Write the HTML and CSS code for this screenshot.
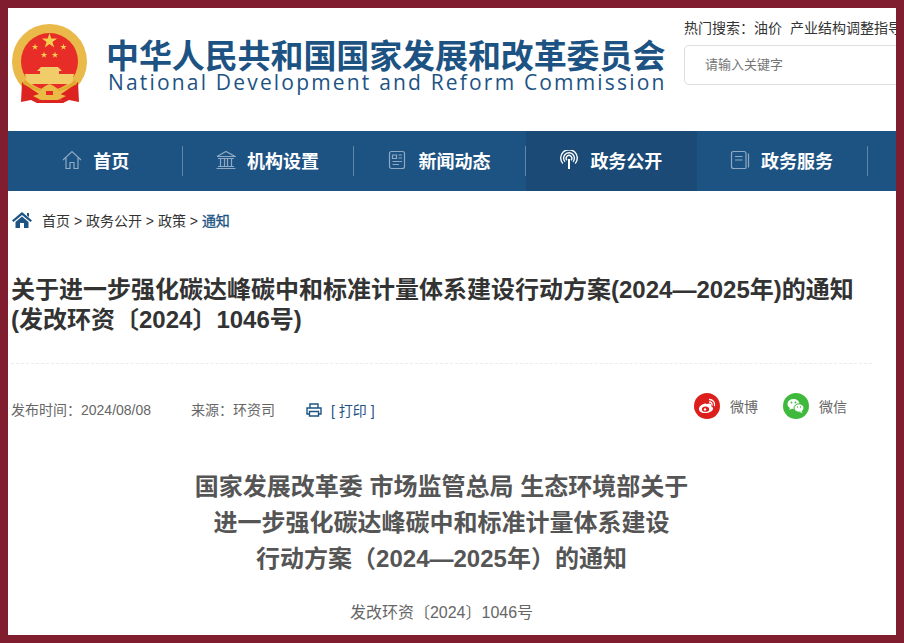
FILE: index.html

```html
<!DOCTYPE html>
<html lang="zh-CN">
<head>
  <meta charset="UTF-8" />
  <title>关于进一步强化碳达峰碳中和标准计量体系建设行动方案(2024—2025年)的通知</title>
  <link rel="stylesheet" href="styles.css">
</head>
<body>
  <div class="page">
    <header class="header">
      <svg class="emblem" viewBox="0 0 76 80" width="76" height="80">
        <defs>
          <polygon id="star" points="0,-1 .2245,-.309 .951,-.309 .363,.118 .588,.809 0,.382 -.588,.809 -.363,.118 -.951,-.309 -.2245,-.309" />
        </defs>
        <circle cx="37.5" cy="37.5" r="37.5" fill="#e9b949" />
        <circle cx="37.5" cy="37.5" r="28.5" fill="#e82c27" />
        <g fill="#f4d04e">
          <use href="#star" transform="translate(37.5 17) scale(8)" />
          <use href="#star" transform="translate(23 23) scale(3.4)" />
          <use href="#star" transform="translate(51.5 23) scale(3.4)" />
          <use href="#star" transform="translate(32 31) scale(3.4)" />
          <use href="#star" transform="translate(43 31) scale(3.4)" />
        </g>
        <path d="M25 47 L29 43 H46 L50 47 H47 V50 H28 V47 Z" fill="#f1cd6a" />
        <path d="M13 50 H62 L60 60 H15 Z" fill="#f1cd6a" />
        <path d="M10 58 L9 78 L19 76 L25 79 L30 72 L21 66 Z" fill="#dc2320" />
        <path d="M66 58 L67 78 L57 76 L51 79 L46 72 L55 66 Z" fill="#dc2320" />
        <path d="M24 79 L30 73 H46 L52 79 Z" fill="#dc2320" />
        <path d="M13 56 Q37.5 78 63 56 L65 60 Q37.5 76 11 60 Z" fill="#e2a92f" />
        <path d="M27 70 Q30 62 37.5 60 Q45 62 48 70 L54 72 L46 76 H29 L21 72 Z" fill="#eabb45" />
        <rect x="34" y="67" width="7" height="4" fill="#e82c27" />
      </svg>
      <div class="site-name">
        <div class="site-cn">中华人民共和国国家发展和改革委员会</div>
        <div class="site-en">National Development and Reform Commission</div>
      </div>
      <div class="search">
        <div class="hot">热门搜索：<span class="hot-word">油价</span><span class="hot-word">产业结构调整指导目录</span></div>
        <div class="search-box">请输入关键字</div>
      </div>
    </header>

    <nav class="nav">
      <a class="nav-item" href="#">
        <svg class="nav-icon" viewBox="0 0 20 20" width="20" height="20"><path d="M1 10 L10 1.5 L19 10 M4 8 V18.5 H8 V12.5 H12 V18.5 H16 V8" /></svg>
        <span>首页</span>
      </a>
      <i class="nav-sep"></i>
      <a class="nav-item" href="#">
        <svg class="nav-icon" viewBox="0 0 20 20" width="20" height="20"><path d="M1 6.5 L10 1.5 L19 6.5 H1 M2 8.5 H18 M4.5 9 V16 M8.5 9 V16 M11.5 9 V16 M15.5 9 V16 M2 16.5 H18 M0.5 18.5 H19.5" /></svg>
        <span>机构设置</span>
      </a>
      <i class="nav-sep"></i>
      <a class="nav-item" href="#">
        <svg class="nav-icon" viewBox="0 0 20 20" width="20" height="20"><rect x="2.5" y="1.5" width="15" height="17" rx="2" /><path d="M5.5 5 H9.5 V8.5 H5.5 Z M11.5 5 H15 M11.5 8 H15 M5.5 11.5 H15 M5.5 14.5 H12" /></svg>
        <span>新闻动态</span>
      </a>
      <i class="nav-sep"></i>
      <a class="nav-item active" href="#">
        <svg class="nav-icon" viewBox="0 0 20 20" width="20" height="20"><path d="M3.8 13.5 A8.3 8.3 0 1 1 16.2 13.5 M6 11.8 A5.4 5.4 0 1 1 14 11.8 M8 10.2 A2.8 2.8 0 1 1 12 10.2" /><path class="mast" d="M10 9 V19" /></svg>
        <span>政务公开</span>
      </a>
      <a class="nav-item" href="#">
        <svg class="nav-icon" viewBox="0 0 20 20" width="20" height="20"><path d="M16 18.5 H3.5 Q1.5 18.5 1.5 16.5 V3.5 Q1.5 1.5 3.5 1.5 H14 Q16 1.5 16 3.5 V18.5 M18.5 3.5 V17.5 M5 6.5 H12.5 M5 10 H12.5" /></svg>
        <span>政务服务</span>
      </a>
      <i class="nav-sep"></i>
    </nav>

    <main class="main">
      <div class="crumbs">
        <svg class="crumb-home" viewBox="0 0 20 16" width="20" height="16"><path d="M10 0 L20 8.5 L18.5 10 L10 3 L1.5 10 L0 8.5 Z M3.5 10 L10 4.5 L16.5 10 V16 H12 V11 H8 V16 H3.5 Z M15 1 H17 V5 L15 3.5 Z" /></svg>
        <span>首页 &gt; 政务公开 &gt; 政策 &gt; </span><b>通知</b>
      </div>

      <h1 class="title">关于进一步强化碳达峰碳中和标准计量体系建设行动方案(2024—2025年)的通知<br>(发改环资〔2024〕1046号)</h1>

      <div class="meta">
        <div class="meta-left">
          <span class="date">发布时间：2024/08/08</span>
          <span class="source">来源：环资司</span>
          <a class="print" href="#">
            <svg viewBox="0 0 16 14" width="16" height="14"><path d="M4 5 V1 H12 V5 M3 11 H1 V5 H15 V11 H13 M3.5 8.5 H12.5 V13 H3.5 Z" /></svg>
            <span>[ 打印 ]</span>
          </a>
        </div>
        <div class="share">
          <a class="share-item" href="#">
            <svg viewBox="0 0 26 26" width="26" height="26">
              <circle cx="13" cy="13" r="13" fill="#dc1f1c" />
              <path d="M11 10.5 C7 11.5 4.5 14 5 16.5 C5.5 19.5 9.5 20.5 13 20 C16.5 19.5 19.5 17.5 19 15 C18.7 13.5 17 13.5 17 13 C17.5 11.5 17 10.5 15.5 10.5 C14.5 10.5 13.5 11 12.5 11.3 C12.5 10.5 12 10.3 11 10.5 Z" fill="#fff" />
              <ellipse cx="11.5" cy="16.2" rx="3.6" ry="2.6" fill="#dc1f1c" />
              <circle cx="11" cy="16.4" r="1.2" fill="#fff" />
              <path d="M15.5 6.5 A5 5 0 0 1 20.5 12.5 M15.5 9 A2.5 2.5 0 0 1 18 12" fill="none" stroke="#fff" stroke-width="1.3" stroke-linecap="round" />
            </svg>
            <span>微博</span>
          </a>
          <a class="share-item" href="#">
            <svg viewBox="0 0 26 26" width="26" height="26">
              <circle cx="13" cy="13" r="13" fill="#3eb93c" />
              <ellipse cx="10.5" cy="11" rx="6" ry="5" fill="#fff" />
              <path d="M7 14 L6.5 17 L10 15 Z" fill="#fff" />
              <ellipse cx="16" cy="15" rx="5" ry="4.2" stroke="#3eb93c" stroke-width="1" fill="#fff" />
              <path d="M18.5 18 L19.5 20 L16.5 19 Z" fill="#fff" />
              <circle cx="8.5" cy="9.5" r=".9" fill="#3eb93c" />
              <circle cx="12.5" cy="9.5" r=".9" fill="#3eb93c" />
              <circle cx="14.5" cy="14" r=".7" fill="#3eb93c" />
              <circle cx="17.5" cy="14" r=".7" fill="#3eb93c" />
            </svg>
            <span>微信</span>
          </a>
        </div>
      </div>

      <article class="article">
        <h2 class="article-title">国家发展改革委 市场监管总局 生态环境部关于<br>进一步强化碳达峰碳中和标准计量体系建设<br>行动方案（2024—2025年）的通知</h2>
        <p class="doc-no">发改环资〔2024〕1046号</p>
      </article>
    </main>
  </div>
</body>
</html>
```

FILE: styles.css

```css
* {
  margin: 0;
  padding: 0;
  box-sizing: border-box;
}

html,
body {
  height: 100%;
  overflow: hidden;
}

body {
  font-family: "Liberation Sans", "Noto Sans CJK SC", sans-serif;
  background: #fff;
  color: #333;
}

a {
  color: inherit;
  text-decoration: none;
}

.page {
  height: 643px;
  border: 8px solid #801e2f;
  overflow: hidden;
  background: #fff;
}

/* header */
.header {
  display: flex;
  height: 123px;
  padding: 16px 0 0 4px;
  overflow: hidden;
}

.emblem {
  flex: none;
}

.site-name {
  flex: none;
  width: 572px;
  margin-left: 19px;
  padding-top: 12px;
  color: #1d5383;
}

.site-cn {
  margin-left: -1px;
  font-family: "Noto Sans CJK SC", sans-serif;
  font-size: 33px;
  font-weight: 700;
  line-height: 36px;
  letter-spacing: -0.1px;
  white-space: nowrap;
}

.site-en {
  margin-top: -2px;
  margin-left: 1px;
  font-family: "Open Sans", sans-serif;
  font-size: 21px;
  line-height: 24px;
  letter-spacing: 2.18px;
  white-space: nowrap;
}

.search {
  flex: none;
  width: 300px;
  margin-left: 5px;
}

.hot {
  font-size: 14px;
  line-height: 20px;
  margin-top: -6px;
  white-space: nowrap;
}

.hot-word {
  margin-right: 8px;
}

.search-box {
  height: 40px;
  margin-top: 7px;
  padding-left: 20px;
  border: 1px solid #ddd;
  border-radius: 5px;
  font-size: 13px;
  line-height: 38px;
  color: #757575;
}

/* nav */
.nav {
  display: flex;
  align-items: center;
  height: 60px;
  padding-left: 3px;
  background: #1d5383;
}

.nav-item {
  display: flex;
  align-items: center;
  justify-content: center;
  gap: 11px;
  width: 170.6px;
  height: 60px;
  padding: 0 1px 2px 0;
  font-family: "Noto Sans CJK SC", sans-serif;
  font-size: 18px;
  font-weight: 700;
  color: #fff;
}

.nav-item.active {
  width: 171.2px;
  background: #1a4a75;
}

.nav-item.active + .nav-item {
  width: 170px;
}

.nav-sep {
  flex: none;
  width: 1px;
  height: 30px;
  background: rgba(255, 255, 255, 0.3);
}

.nav-icon {
  flex: none;
  fill: none;
  stroke: rgba(255, 255, 255, 0.5);
  stroke-width: 1.2;
}

.active .nav-icon {
  stroke: #fff;
  stroke-width: 1.4;
}

.nav-icon .mast {
  stroke-width: 2;
}

/* content */
.main {
  width: 864px;
  padding: 0 0 0 3px;
}

.crumbs {
  display: flex;
  align-items: center;
  height: 16px;
  margin-top: 21px;
  padding-left: 1px;
  font-size: 14px;
  white-space: pre;
}

.crumb-home {
  margin-right: 10px;
  fill: #1d5383;
}

.crumbs b {
  font-weight: 400;
  color: #1d5383;
  -webkit-text-stroke: 0.3px #1d5383;
}

.title {
  margin-top: 47px;
  padding-bottom: 28px;
  border-bottom: 1px dashed #ececec;
  font-size: 24px;
  font-weight: 700;
  line-height: 30px;
  color: #333;
}

.meta {
  display: flex;
  justify-content: space-between;
  align-items: flex-start;
  padding-top: 29px;
  font-size: 14px;
  color: #666;
}

.meta-left {
  display: flex;
  align-items: center;
  padding-top: 5px;
}

.source {
  margin-left: 40px;
}

.print {
  display: flex;
  align-items: center;
  gap: 9px;
  margin-left: 31px;
  margin-top: 2px;
  color: #1d5383;
}

.print svg {
  fill: none;
  stroke: #1d5383;
  stroke-width: 1.4;
}

.share {
  display: flex;
  gap: 25px;
  padding-right: 25px;
}

.share-item {
  display: flex;
  align-items: center;
  gap: 10px;
  color: #666;
}

.article {
  padding-top: 49px;
  text-align: center;
  color: #555;
}

.article-title {
  font-size: 24px;
  font-weight: 700;
  line-height: 36px;
}

.doc-no {
  margin-top: 24px;
  font-size: 16px;
  line-height: 24px;
  color: #666;
}
```
